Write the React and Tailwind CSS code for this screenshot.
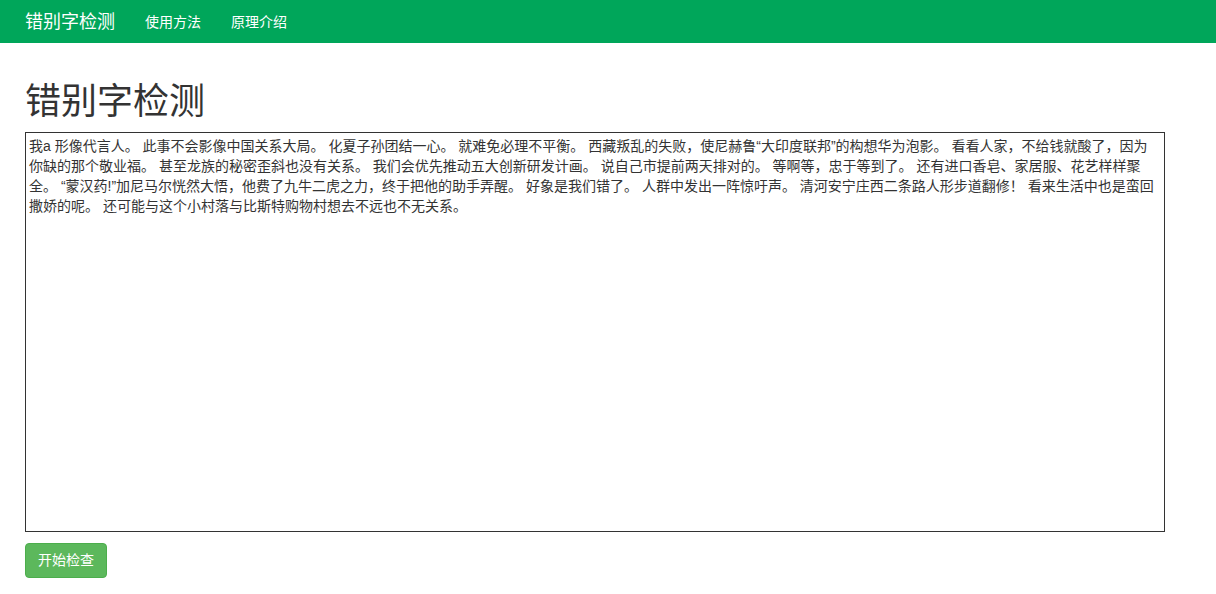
import React from "react";

const TEXT = "我a 形像代言人。 此事不会影像中国关系大局。 化夏子孙团结一心。 就难免必理不平衡。 西藏叛乱的失败，使尼赫鲁“大印度联邦”的构想华为泡影。 看看人家，不给钱就酸了，因为你缺的那个敬业福。 甚至龙族的秘密歪斜也没有关系。 我们会优先推动五大创新研发计画。 说自己市提前两天排对的。 等啊等，忠于等到了。 还有进口香皂、家居服、花艺样样聚全。 “蒙汉药!”加尼马尔恍然大悟，他费了九牛二虎之力，终于把他的助手弄醒。 好象是我们错了。 人群中发出一阵惊吁声。 清河安宁庄西二条路人形步道翻修！ 看来生活中也是蛮回撒娇的呢。 还可能与这个小村落与比斯特购物村想去不远也不无关系。";

export default function App() {
  return (
    <div className="min-h-[594px] bg-white text-[#333] font-['Liberation_Sans','Noto_Sans_CJK_SC',sans-serif]">
      <nav className="h-[43px] bg-[#00a65a] flex items-center px-[25px]">
        <span className="text-white text-[18px] leading-none">错别字检测</span>
        <a className="ml-[30px] text-white text-[14px] leading-none">使用方法</a>
        <a className="ml-[30px] text-white text-[14px] leading-none">原理介绍</a>
      </nav>
      <div className="px-[25px]">
        <h1 className="text-[36px] leading-[1.1] mt-[39px] mb-[10px] font-normal">错别字检测</h1>
        <textarea
          className="block w-[1140px] h-[400px] border border-[#333] px-[3px] py-[3px] text-[14px] leading-[20px] resize-none outline-none text-[#333]"
          defaultValue={TEXT}
        />
        <button className="mt-[11px] h-[35px] px-[12px] bg-[#5cb85c] border border-[#4cae4c] rounded-[4px] text-white text-[14px] leading-none">
          开始检查
        </button>
      </div>
    </div>
  );
}
